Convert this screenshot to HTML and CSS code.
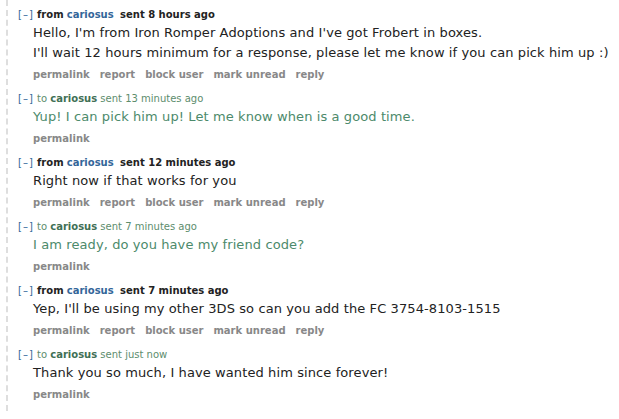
FILE: index.html
```html
<!DOCTYPE html>
<html lang="en">
<head>
<meta charset="utf-8">
<title>Messages</title>
<link rel="stylesheet" href="styles.css">
</head>
<body>
<div class="thread">
  <div class="msg">
    <p class="tagline"><a class="expand">[–]</a> <span class="dir">from</span> <a class="author">cariosus</a>&nbsp; <span class="date">sent 8 hours ago</span></p>
    <div class="md">
      <p>Hello, I'm from Iron Romper Adoptions and I've got Frobert in boxes.</p>
      <p>I'll wait 12 hours minimum for a response, please let me know if you can pick him up :)</p>
    </div>
    <ul class="buttons"><li>permalink</li><li>report</li><li>block user</li><li>mark unread</li><li>reply</li></ul>
  </div>

  <div class="msg sent">
    <p class="tagline"><a class="expand">[–]</a> <span class="dir">to</span> <a class="author">cariosus</a> <span class="date">sent 13 minutes ago</span></p>
    <div class="md"><p>Yup! I can pick him up! Let me know when is a good time.</p></div>
    <ul class="buttons"><li>permalink</li></ul>
  </div>

  <div class="msg">
    <p class="tagline"><a class="expand">[–]</a> <span class="dir">from</span> <a class="author">cariosus</a>&nbsp; <span class="date">sent 12 minutes ago</span></p>
    <div class="md"><p>Right now if that works for you</p></div>
    <ul class="buttons"><li>permalink</li><li>report</li><li>block user</li><li>mark unread</li><li>reply</li></ul>
  </div>

  <div class="msg sent">
    <p class="tagline"><a class="expand">[–]</a> <span class="dir">to</span> <a class="author">cariosus</a> <span class="date">sent 7 minutes ago</span></p>
    <div class="md"><p>I am ready, do you have my friend code?</p></div>
    <ul class="buttons"><li>permalink</li></ul>
  </div>

  <div class="msg">
    <p class="tagline"><a class="expand">[–]</a> <span class="dir">from</span> <a class="author">cariosus</a>&nbsp; <span class="date">sent 7 minutes ago</span></p>
    <div class="md"><p>Yep, I'll be using my other 3DS so can you add the FC 3754-8103-1515</p></div>
    <ul class="buttons"><li>permalink</li><li>report</li><li>block user</li><li>mark unread</li><li>reply</li></ul>
  </div>

  <div class="msg sent latest">
    <p class="tagline"><a class="expand">[–]</a> <span class="dir">to</span> <a class="author">cariosus</a> <span class="date">sent just now</span></p>
    <div class="md"><p>Thank you so much, I have wanted him since forever!</p></div>
    <ul class="buttons"><li>permalink</li></ul>
  </div>
</div>
</body>
</html>
```
FILE: styles.css
```css
html, body {
  margin: 0;
  padding: 0;
  background: #fff;
}
body {
  font-family: "DejaVu Sans", Verdana, sans-serif;
  color: #222;
  padding: 0 0 0 6px;
}
.thread {
  border-left: 2px dashed #dedede;
  padding: 7px 0 8px 10px;
  display: flex;
  flex-direction: column;
  gap: 8px;
}
.msg {
  display: flex;
  flex-direction: column;
}
.tagline {
  margin: 0;
  font-size: 10px;
  line-height: 16px;
  white-space: nowrap;
}
.expand {
  color: #369;
  font-weight: normal;
  letter-spacing: 1px;
}
.dir, .date {
  font-weight: bold;
  color: #222;
}
.author {
  font-weight: bold;
  color: #369;
}
.md {
  margin-left: 15px;
  font-size: 13px;
  line-height: 20px;
  letter-spacing: 0.1px;
  color: #222;
}
.md p {
  margin: 0;
}
.buttons {
  list-style: none;
  margin: 4px 0 0 15px;
  padding: 0;
  display: flex;
  gap: 10px;
  font-size: 10px;
  line-height: 16px;
  font-weight: bold;
  color: #888;
}
.sent .dir, .sent .date {
  font-weight: normal;
  color: #5d8d6d;
}
.sent .author {
  color: #3f7055;
}
.sent .md {
  color: #4c8a6b;
}
.sent.latest .md {
  color: #222;
}
```
